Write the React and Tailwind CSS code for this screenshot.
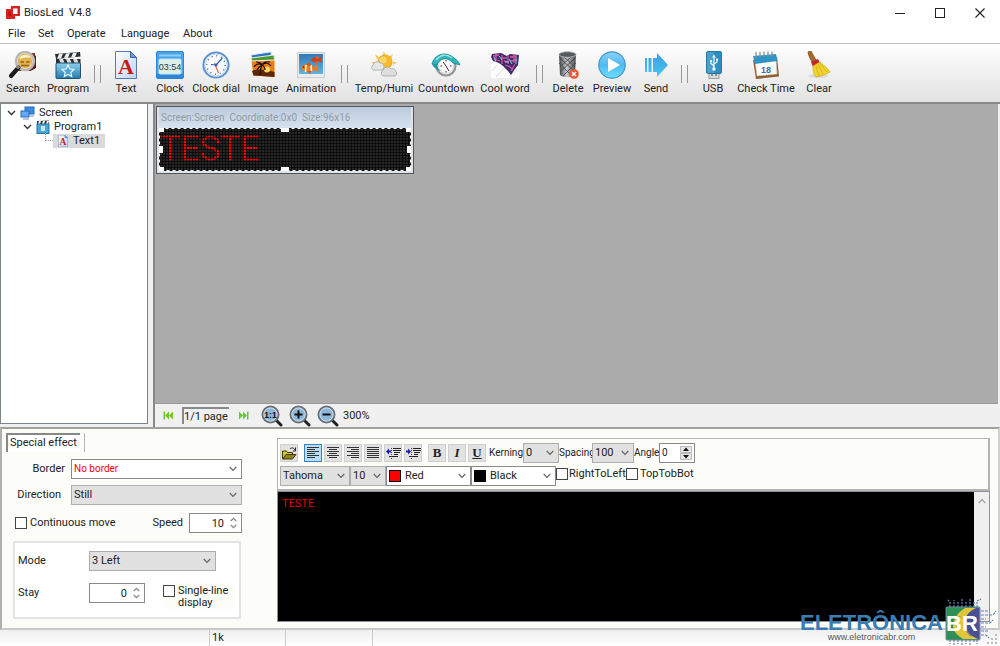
import { useState } from "react";

/* ---------- toolbar icons ---------- */

const SearchIcon = () => (
  <svg width="30" height="28" viewBox="0 0 30 28">
    <path d="M10 2h17v15l-4 3H10z" fill="#8d2f27" />
    <path d="M24 3l4 2v12l-4 2z" fill="#5b1c18" />
    <circle cx="17" cy="10" r="9" fill="#f1e3bd" stroke="#b9b9bd" strokeWidth="2.5" />
    <circle cx="17" cy="10" r="7.2" fill="#e2b34f" />
    <path d="M11 8c2-5 9-6 12-1-4-1-8 0-12 1z" fill="#fff2cf" />
    <path d="M12.500 11h3.500M18 11h3.500M13 14.500h8" stroke="#9a5f1c" strokeWidth="1.300" />
    <path d="M10.500 16.500L3 25" stroke="#1c1c1c" strokeWidth="4.200" strokeLinecap="round" />
    <path d="M11 15l-2 2.400" stroke="#8f8f8f" strokeWidth="3" />
  </svg>
);

const ProgramIcon = () => (
  <svg width="28" height="28" viewBox="0 0 28 28">
    <defs>
      <linearGradient id="clap" x1="0" y1="0" x2="0" y2="1">
        <stop offset="0" stopColor="#8ed2ee" />
        <stop offset="1" stopColor="#2279ad" />
      </linearGradient>
    </defs>
    <path d="M1 3l25-2 .5 4.500L2 8z" fill="#2b2f33" />
    <path d="M5 3l4-.4-2 4.800-4 .3zM12 2.400l4-.3-2 4.700-4 .3zM19 1.900l4-.3-2 4.700-4 .3z" fill="#eee" />
    <rect x="2" y="8" width="24.500" height="5" fill="#2b2f33" />
    <path d="M5 8h4l2 5H7zM12 8h4l2 5h-4zM19 8h4l2 5h-4z" fill="#ddd" />
    <rect x="2" y="12" width="24.500" height="15.500" rx="1" fill="url(#clap)" stroke="#25506b" />
    <path d="M14 14l1.800 3.900 4.200.5-3.100 2.900.8 4.200-3.700-2.100-3.700 2.100.8-4.200L8 18.400l4.200-.5z" fill="#4ba3dd" stroke="#e6f6ff" strokeWidth="1.200" />
  </svg>
);

const TextIcon = ({ size = 28 }) => (
  <svg width={size} height={size} viewBox="0 0 28 28">
    <defs>
      <linearGradient id="sheet" x1="0" y1="0" x2="1" y2="1">
        <stop offset="0" stopColor="#fff" />
        <stop offset="1" stopColor="#bcd6f5" />
      </linearGradient>
    </defs>
    <path d="M3.500.5h15l6 6v21h-21z" fill="url(#sheet)" stroke="#5577b5" />
    <path d="M18.500.5v6h6z" fill="#6e9ade" stroke="#3c62a8" />
    <text x="14" y="22.500" textAnchor="middle" fontFamily="Liberation Serif, serif" fontWeight="700" fontSize="22" fill="#c61a12">A</text>
  </svg>
);

const ClockIcon = () => (
  <svg width="28" height="28" viewBox="0 0 28 28">
    <rect x=".5" y=".5" width="27" height="27" rx="1.500" fill="#4aa3e8" stroke="#2b86d6" />
    <rect x="1" y="23" width="26" height="4" fill="#2f86d8" />
    <rect x="3" y="3.500" width="22" height="2" fill="#8bd0fa" />
    <rect x="3" y="8" width="22" height="15" rx="1" fill="#dcefe6" stroke="#c2e3f7" />
    <text x="14" y="18.500" textAnchor="middle" fontFamily="Liberation Sans, sans-serif" fontSize="9" fill="#1b3c4c">03:54</text>
  </svg>
);

const DialIcon = () => (
  <svg width="28" height="28" viewBox="0 0 28 28">
    <circle cx="14" cy="14" r="12.600" fill="#eef5fc" stroke="#5b93d0" strokeWidth="2" />
    <circle cx="14" cy="14" r="11" fill="#f7fbff" stroke="#c3daf0" />
    <circle cx="14" cy="14" r="9.200" fill="none" stroke="#556" strokeWidth="1.400" strokeDasharray="1 3.820" />
    <path d="M14 14L20.500 7M14 14l-5-.5" stroke="#2c62b0" strokeWidth="1.200" />
    <path d="M12.500 12l4 10" stroke="#ec6a47" strokeWidth="1.200" />
    <circle cx="14" cy="14" r="1.500" fill="#2c62b0" />
  </svg>
);

const ImageIcon = () => (
  <svg width="28" height="28" viewBox="0 0 28 28">
    <path d="M2 4L22 .8l1 10L4 14z" fill="#2e76c2" stroke="#e2ebf3" />
    <path d="M2 7l23-3 1 10L4 17z" fill="#4a9a38" stroke="#e2ebe0" />
    <path d="M2 10l24-1v17.500L4 25z" fill="#e97d12" stroke="#f4efe4" />
    <path d="M3 20c7-3 14-1 22.500 1v5L4.500 24.500z" fill="#5c2609" />
    <circle cx="18" cy="18.500" r="3" fill="#ffd766" />
    <path d="M11 24c0-4 .4-7 2-10M13 14c-3-2-6-1-8 2M13 14c3-3 7-2 9 1M13 14c-1-2-3-3-6-3M13 14c1-2 4-4 8-3M13 14c-2 1-4 3-5 5M13 14c2 1 3 2 3 5" stroke="#1d0c04" strokeWidth="1.200" fill="none" />
  </svg>
);

const AnimationIcon = () => (
  <svg width="28" height="28" viewBox="0 0 28 28">
    <defs>
      <linearGradient id="sea" x1="0" y1="0" x2="0" y2="1">
        <stop offset="0" stopColor="#3579b4" />
        <stop offset="1" stopColor="#5fb3df" />
      </linearGradient>
    </defs>
    <rect x=".5" y="1.500" width="27" height="25" fill="#e9edf0" stroke="#c8ced4" />
    <rect x="2" y="3" width="24" height="20" fill="url(#sea)" />
    <path d="M4 17c3-5 9-5 13-1l4-3-1 4 2 4-5-2c-4 4-10 2-13-2z" fill="#f07a1c" />
    <path d="M9 14l-.5 7M14 14l.5 6" stroke="#fff" strokeWidth="1.500" />
    <path d="M9 14l3-3 2 4zM10 20l3 3 1-3z" fill="#d95512" />
    <path d="M14 9c2-3 5-3 7-1l4-3-1 4 1 3-4-2c-2 3-6 1-7-1z" fill="#cf4218" />
    <path d="M18 7l2-3 2 4zM18 11l2 3 1-4z" fill="#e2602a" />
    <circle cx="6.500" cy="16" r=".8" fill="#111" />
  </svg>
);

const Cloud = ({ d, fill }) => <path d={d} fill={fill} stroke="#a3a6a6" strokeWidth=".8" />;

const TempIcon = () => (
  <svg width="28" height="28" viewBox="0 0 28 28">
    <path d="M14 0l1.500 5h-3zM5 3l4 3.500-2 2zM23 3l-2 5-2-2zM27 11l-4 3v-3zM1 11l5 0-1 3z" fill="#f4c64a" />
    <circle cx="15" cy="11" r="7" fill="#f6bb2c" stroke="#eea51c" />
    <circle cx="13" cy="9" r="3.500" fill="#fbd66a" />
    <Cloud d="M3 19a3 3 0 0 1 0-5 4 4 0 0 1 7-2 3.500 3.500 0 0 1 4 4l-1 3z" fill="#e4e6e5" />
    <Cloud d="M13 25a3.500 3.500 0 0 1 0-6 4.500 4.500 0 0 1 8-1 3.500 3.500 0 0 1 5 3 2.500 2.500 0 0 1-1 4z" fill="#dcdedd" />
  </svg>
);

const CountdownIcon = () => (
  <svg width="30" height="28" viewBox="0 0 30 28">
    <circle cx="15" cy="15" r="9.500" fill="#f6f7f7" stroke="#8e9593" strokeWidth="2.200" />
    <circle cx="15" cy="15" r="7.500" fill="#fafafa" stroke="#d5d9d8" />
    <path d="M15 15l-3-4M15 15l3 5M15 9v1.500M15 20v1.500M9.500 15H11M19 15h1.500" stroke="#333" />
    <path d="M1 13C3 4 14-1 23 7c3 2 5 4 6 7l-7-2C17 6 9 6 6 14z" fill="#2fb6bc" stroke="#13838d" strokeWidth=".8" />
    <path d="M5 9c4-5 10-7 16-2" stroke="#9be4e4" strokeWidth="1.300" fill="none" />
    <path d="M1 13c1 3 5 6 9 7-3-2-4-4-4-6z" fill="#1c9aa2" />
  </svg>
);

const CoolWordIcon = () => (
  <svg width="30" height="28" viewBox="0 0 30 28">
    <rect x="1" y="1" width="28" height="26" fill="#fcfcfc" />
    <path d="M2 20l5-6M6 26l8-9M2 9l6-7M20 26l8-8" stroke="#ddd" />
    <path d="M2 3l9-1 6 3 3-2 9 1-1 10-3 4-4 6-3-4-5-5-4-3-6-2-2-4z" fill="#3a2c6c" />
    <path d="M3 5l6-1M6 3v6M4 8l6 2M12 4v9M11 7h6M14 10l4 1M18 4v9M20 6l7-1M24 3v9M20 10l7-1M15 14l5 2M19 15l4 4M25 13l-4 7" stroke="#d0559a" strokeWidth="1.300" fill="none" />
    <path d="M9 5l3 4M19 8l3 5M15 11h4M4 6l2 5M26 6v7" stroke="#8fc9dc" />
  </svg>
);

const DeleteIcon = () => (
  <svg width="28" height="28" viewBox="0 0 28 28">
    <defs>
      <linearGradient id="bin" x1="0" x2="1">
        <stop offset="0" stopColor="#3d3f43" />
        <stop offset=".45" stopColor="#c8cacc" />
        <stop offset="1" stopColor="#45474b" />
      </linearGradient>
    </defs>
    <path d="M5 3h17l-1 21c-3 3-12 3-15 0z" fill="url(#bin)" />
    <path d="M6 7l15 14M5 12l13 13M9 5l12 11M21 7L6 21M22 12L9 25M17 6L6 16" stroke="#44464b" strokeWidth=".9" />
    <ellipse cx="13.500" cy="3.500" rx="8.500" ry="2.800" fill="#55585d" stroke="#b7babd" />
    <circle cx="20" cy="23" r="4.800" fill="#ec5431" />
    <path d="M18 21l4 4M22 21l-4 4" stroke="#fff" strokeWidth="1.600" />
  </svg>
);

const PreviewIcon = () => (
  <svg width="28" height="28" viewBox="0 0 28 28">
    <defs>
      <linearGradient id="play" x1="0" y1="0" x2="0" y2="1">
        <stop offset="0" stopColor="#8bd3f5" />
        <stop offset=".5" stopColor="#4fb9f0" />
        <stop offset="1" stopColor="#6fe0fb" />
      </linearGradient>
    </defs>
    <circle cx="14" cy="14" r="13.200" fill="url(#play)" stroke="#4295cf" strokeWidth="1.200" />
    <path d="M10 7l12 7-12 7z" fill="#fff" />
  </svg>
);

const SendIcon = () => (
  <svg width="28" height="28" viewBox="0 0 28 28">
    <defs>
      <linearGradient id="send" x1="0" y1="0" x2="0" y2="1">
        <stop offset="0" stopColor="#3a9be0" />
        <stop offset="1" stopColor="#4cc8f3" />
      </linearGradient>
    </defs>
    <path d="M3 7h2v14H3zM6.500 7h3v14h-3zM11 7h4V2l11 12-11 12v-5h-4z" fill="url(#send)" />
  </svg>
);

const UsbIcon = () => (
  <svg width="28" height="28" viewBox="0 0 28 28">
    <rect x="10" y="21" width="10" height="6.500" fill="#d8dadb" stroke="#9c9fa1" />
    <path d="M12 24h2M16 24h2" stroke="#777" strokeWidth="1.500" />
    <rect x="7.500" y=".5" width="15" height="22" rx="1.500" fill="#2e8ec0" stroke="#2777a3" />
    <path d="M8 1h7v21H8z" fill="#58aed6" opacity=".55" />
    <path d="M15 18V6M15 15l-3-2.500V10M15 13l3-2V8.500" stroke="#fff" strokeWidth="1.100" fill="none" />
    <path d="M15 3.500l1.800 3h-3.600z" fill="#fff" />
    <circle cx="15" cy="18" r="1.700" fill="#fff" />
    <circle cx="12" cy="10" r="1.100" fill="#fff" />
    <rect x="17" y="7.500" width="2" height="2" fill="#fff" />
  </svg>
);

const CheckTimeIcon = () => (
  <svg width="28" height="28" viewBox="0 0 28 28">
    <path d="M1 9l3 19 23-2.500L25 6z" fill="#8f5c33" />
    <path d="M3 10l2 15 20-2L24 8z" fill="#fbfbf8" stroke="#cfc6b8" strokeWidth=".6" />
    <path d="M1 5l23-2 1.500 7L3 13z" fill="#2d94c6" />
    <path d="M4 1v6M8 1v5.500M12 .5v5.500M16 .5V6M20 .5v5" stroke="#8b8f92" strokeWidth="1.300" />
    <text x="14" y="21.500" textAnchor="middle" fontFamily="Liberation Sans, sans-serif" fontWeight="700" fontSize="9" fill="#3d6dac">18</text>
  </svg>
);

const ClearIcon = () => (
  <svg width="28" height="28" viewBox="0 0 28 28">
    <ellipse cx="13" cy="25" rx="10" ry="2" fill="#dcdcdc" />
    <path d="M3 1c2-1 4-1 4 1l4 7-4 2-3-6z" fill="#a76826" stroke="#74420f" strokeWidth=".7" />
    <path d="M6 11l7-3 2 4-7 4z" fill="#c3252b" />
    <path d="M8 15l7-4c3 3 8 6 10 10-3 2-8 4-14 5-3-3-3-7-3-11z" fill="#f1d42b" stroke="#d3aa1c" strokeWidth=".7" />
    <path d="M11 15l3 10M13 13l5 10M15 12l7 9" stroke="#d3aa1c" strokeWidth=".8" />
  </svg>
);

const tools = [
  { label: "Search", icon: <SearchIcon />, w: "w-[46px]" },
  { label: "Program", icon: <ProgramIcon />, w: "w-[44px]" },
  { sep: true, w: "w-[14px]" },
  { label: "Text", icon: <TextIcon />, w: "w-[44px]" },
  { label: "Clock", icon: <ClockIcon />, w: "w-[44px]" },
  { label: "Clock dial", icon: <DialIcon />, w: "w-[48px]" },
  { label: "Image", icon: <ImageIcon />, w: "w-[46px]" },
  { label: "Animation", icon: <AnimationIcon />, w: "w-[50px]" },
  { sep: true, w: "w-[16px]" },
  { label: "Temp/Humi", icon: <TempIcon />, w: "w-[64px]" },
  { label: "Countdown", icon: <CountdownIcon />, w: "w-[60px]" },
  { label: "Cool word", icon: <CoolWordIcon />, w: "w-[58px]" },
  { sep: true, w: "w-[10px]" },
  { label: "Delete", icon: <DeleteIcon />, w: "w-[48px]" },
  { label: "Preview", icon: <PreviewIcon />, w: "w-[40px]" },
  { label: "Send", icon: <SendIcon />, w: "w-[48px]" },
  { sep: true, w: "w-[8px]" },
  { label: "USB", icon: <UsbIcon />, w: "w-[50px]" },
  { label: "Check Time", icon: <CheckTimeIcon />, w: "w-[56px]" },
  { label: "Clear", icon: <ClearIcon />, w: "w-[50px]" },
];

/* ---------- form pieces ---------- */

const Chevron = () => (
  <svg className="pointer-events-none mr-1 shrink-0" width="8" height="6" viewBox="0 0 8 6">
    <path d="M.7 1L4 4.500 7.300 1" fill="none" stroke="#666" strokeWidth="1.200" />
  </svg>
);

const Select = ({ id, label, value, className, swatch, textClass = "" }) => (
  <div className={`flex h-5 shrink-0 items-center border ${className}`}>
    {swatch}
    <select id={id} aria-label={label} defaultValue={value} className={`h-full min-w-0 flex-1 appearance-none bg-transparent pl-0.5 leading-4 outline-none ${textClass}`}>
      <option>{value}</option>
    </select>
    <Chevron />
  </div>
);

const Spin = ({ id, value, className }) => (
  <div className={`flex h-5 shrink-0 items-center border border-[#8a8a8a] bg-white ${className}`}>
    <input id={id} type="text" inputMode="numeric" defaultValue={value} className="h-full min-w-0 flex-1 bg-transparent pr-0.5 text-right outline-none" />
    <svg className="mx-1 shrink-0" width="7" height="12" viewBox="0 0 7 12">
      <path d="M.8 4L3.500 1.300 6.200 4M.8 8l2.700 2.700L6.200 8" fill="none" stroke="#888" strokeWidth="1.300" />
    </svg>
  </div>
);

const Check = ({ id, className = "" }) => (
  <input id={id} type="checkbox" className={`h-3 w-3 shrink-0 appearance-none border border-[#444] bg-white checked:bg-[#0078d7] ${className}`} />
);

const FormatButton = ({ label, active, children }) => (
  <button
    aria-label={label}
    className={`flex h-[18px] w-[18px] shrink-0 items-center justify-center border font-[Liberation_Serif,serif] text-[13px] font-bold leading-4 ${
      active ? "border-[#3c82c0] bg-[#b9dcf7]" : "border-[#cfcfcf] bg-[#e2e2e2]"
    }`}>
    {children}
  </button>
);

const Lines = ({ d }) => (
  <svg width="14" height="12" viewBox="0 0 14 12">
    <path d={d} stroke="#333" fill="none" />
  </svg>
);

const IndentIcon = ({ out }) => (
  <svg width="15" height="13" viewBox="0 0 15 13">
    <path d="M7 1.500h8M7 3.500h8M8 5.500h6M8 7.500h4M3 9.500h9" stroke="#222" />
    <path d="M5.500 1v12" stroke="#444" strokeDasharray="1 1" />
    <path d={out ? "M0 4.500l3-3v2h2v2H3v2z" : "M5 4.500l-3-3v2H0v2h2v2z"} fill="#1d1da8" />
  </svg>
);

const Magnifier = ({ children }) => (
  <svg width="22" height="22" viewBox="0 0 22 22">
    <path d="M15 15l5 5" stroke="#222" strokeWidth="3" strokeLinecap="round" />
    <circle cx="9.500" cy="9.500" r="8" fill="#a9cbe6" stroke="#686e75" strokeWidth="2" />
    <circle cx="9.500" cy="9.500" r="6.600" fill="#8db8da" stroke="#dce5ec" strokeWidth=".8" />
    {children}
  </svg>
);

const SkipIcon = ({ end }) => (
  <svg width="10" height="9" viewBox="0 0 10 9">
    <path d={end ? "M0 .5l4 4-4 4zM4 .5l4 4-4 4zM8 .5h1.500v8H8z" : "M10 .5l-4 4 4 4zM6 .5l-4 4 4 4zM.5.5H2v8H.5z"} fill="#6cc92b" />
  </svg>
);

const Expander = () => (
  <svg width="9" height="6" viewBox="0 0 9 6">
    <path d="M1 1l3.500 3.500L8 1" fill="none" stroke="#333" strokeWidth="1.400" />
  </svg>
);

/* LED matrix with resize handles over it */
const LedPanel = () => (
  <svg className="block" width="252" height="43" viewBox="0 0 252 43">
    <defs>
      <pattern id="leds" width="3" height="3" patternUnits="userSpaceOnUse">
        <path d="M0 .5h3M.5 0v3" stroke="#000" strokeOpacity=".6" />
      </pattern>
    </defs>
    <rect width="252" height="43" fill="#262626" />
    <text x="1" y="32" fontFamily="Roboto, sans-serif" fontWeight="300" fontSize="34" fill="#f00" stroke="#f00" strokeWidth=".6">TESTE</text>
    <rect width="252" height="43" fill="url(#leds)" />
    <rect x=".5" y=".5" width="251" height="42" fill="none" stroke="#fff" strokeDasharray="3 3" />
    <path d="M0 0h5v4H0zM122 0h8v4h-8zM247 0h5v4h-5zM0 18h4v7H0zM248 18h4v7h-4zM0 39h5v4H0zM122 39h8v4h-8zM247 39h5v4h-5z" fill="#fff" />
  </svg>
);

const Watermark = () => (
  <div className="pointer-events-none absolute right-0 bottom-0 flex items-end">
    <div className="flex flex-col items-center font-[Liberation_Sans,sans-serif]">
      <span className="text-[22px] font-bold leading-[18px] text-[#3a7cb1]">ELETRÔNICA</span>
      <span className="pb-1 text-[9px] leading-[10px] text-[#555]">www.eletronicabr.com</span>
    </div>
    <svg width="57" height="48" viewBox="0 0 57 48">
      <g stroke="#6381ac" fill="none" strokeWidth="1.200">
        <path d="M7 9V4L4 1M11 9V2M15 9V4M19 9V1M23 9V3M27 9V1M31 9V4M34 9V3l4-2M7 42v4M11 42v5M15 42v4M19 42v5M23 42v4M27 42v5M31 42v3M34 42v4" strokeDasharray="2 1" />
        <path d="M38 13h8M38 17h12l3-4M38 21h5M38 25h9l3-3M38 29h5M38 33h8M38 37h5l3 3" strokeDasharray="3 1" />
      </g>
      <rect x="3" y="9" width="34" height="33" rx="1" fill="#2f9055" stroke="#6f879e" />
      <path d="M28 10h8v31H25c-8-8-9-15-3-21z" fill="#4a4f96" />
      <path d="M22 10h11c-8 4-12 9-11 17 1 6 6 11 13 14H20c-6-4-9-7-10-12 0-7 4-14 12-19z" fill="#e0c63a" />
      <path d="M13 18c8 0 16 5 20 14l-4 7c-4-2-7-6-7-12 0-3 1-6 3-8-4 0-8 1-12-1z" fill="#4a4f96" opacity=".5" />
      <text x="3" y="33" fontFamily="Liberation Sans, sans-serif" fontWeight="700" fontSize="22" fill="#fff">BR</text>
      <path d="M52 36h2v2h-2zM48 40h2v2h-2zM52 40h2v2h-2zM44 44h2v2h-2zM48 44h2v2h-2zM52 44h2v2h-2z" fill="#bbb" />
    </svg>
  </div>
);

function App() {
  const [message, setMessage] = useState("TESTE");
  const grey = "border-[#adadad] bg-[#e1e1e1]";
  const white = "border-[#8a8a8a] bg-white";

  return (
    <div className="relative flex min-h-screen flex-col overflow-hidden bg-[#f0f0f0] font-[Roboto,sans-serif] text-[11px] leading-4 text-[#222]">
      {/* title bar */}
      <header className="flex h-[25px] items-center bg-white pl-1.5">
        <svg width="14" height="13" viewBox="0 0 14 13">
          <path d="M0 3h9v10H0z" fill="#d9231c" />
          <path d="M5 0h9v10H5z" fill="#d9231c" />
          <path d="M7 2.500h4.500v5.500H7z" fill="#fff" />
          <path d="M2.500 5.500H5V10H2.500z" fill="#b81510" />
        </svg>
        <h1 className="ml-1 whitespace-pre">BiosLed  V4.8</h1>
        <div className="ml-auto flex">
          <button aria-label="Minimize" className="flex w-10 justify-center">
            <svg width="10" height="10"><path d="M0 5.500h10" stroke="#222" /></svg>
          </button>
          <button aria-label="Maximize" className="flex w-10 justify-center">
            <svg width="10" height="10"><rect x=".5" y=".5" width="9" height="9" fill="none" stroke="#222" /></svg>
          </button>
          <button aria-label="Close" className="flex w-10 justify-center">
            <svg width="10" height="10"><path d="M.5.5l9 9M9.500.5l-9 9" stroke="#222" strokeWidth="1.100" /></svg>
          </button>
        </div>
      </header>

      <nav className="flex h-[19px] items-center border-b border-[#bdbdbd] bg-white pl-2">
        <button className="w-[30px] text-left">File</button>
        <button className="w-[29px] text-left">Set</button>
        <button className="w-[54px] text-left">Operate</button>
        <button className="w-[62px] text-left">Language</button>
        <button className="text-left">About</button>
      </nav>

      <div className="flex h-[60px] items-start border-b-2 border-[#888] bg-linear-to-b from-white to-[#e2e2e2] pt-[7px]">
        {tools.map((tool, index) =>
          tool.sep ? (
            <div key={index} className={`flex h-8 shrink-0 items-end justify-center gap-[5px] ${tool.w}`}>
              <span className="h-[18px] w-px bg-[#999]" />
              <span className="h-[18px] w-px bg-[#999]" />
            </div>
          ) : (
            <button key={index} className={`flex shrink-0 flex-col items-center gap-0.5 whitespace-nowrap ${tool.w}`}>
              {tool.icon}
              <span>{tool.label}</span>
            </button>
          )
        )}
      </div>

      {/* tree and workspace */}
      <main className="flex flex-1">
        <aside className="mb-[3px] w-[148px] shrink-0 border border-t-0 border-[#7d838b] bg-white pt-0.5">
          <ul className="leading-[14px]">
            <li className="flex items-center gap-1 pl-1.5">
              <Expander />
              <svg width="15" height="14" viewBox="0 0 15 14">
                <rect x="5" y="1" width="9" height="7" fill="#3e8ae0" stroke="#2a68b8" />
                <rect x="1" y="5" width="8" height="6" fill="#62a8f2" stroke="#2a68b8" />
                <path d="M3 13h6M10 10h4" stroke="#7393b8" />
              </svg>
              Screen
            </li>
            <li className="flex items-center gap-1 pl-[22px]">
              <Expander />
              <svg width="14" height="14" viewBox="0 0 14 14">
                <path d="M1 1l12-.5V4H1z" fill="#333" />
                <path d="M3 1h2L4 4H2zM7 1h2L8 4H6zM11 1h2l-1 3h-2z" fill="#fff" />
                <rect x="1" y="4" width="12" height="9.500" fill="#4ba6d6" stroke="#2474a2" />
                <path d="M5 6h4v5H5z" fill="#c9e9f8" />
              </svg>
              Program1
            </li>
            <li className="flex items-center pl-[44px]">
              <span className="-mt-2 h-2 w-2 border-b border-l border-dotted border-[#999]" />
              <span className="flex w-[52px] items-center gap-1 bg-[#dadada] pl-1">
                <TextIcon size={12} />
                Text1
              </span>
            </li>
          </ul>
        </aside>

        <div className="w-[7px] shrink-0 border-r-2 border-[#888]" />

        <section className="mr-0.5 flex min-w-0 flex-1 flex-col">
          <div className="flex-1 border-b border-[#999] bg-[#ababab] pt-0.5 pl-px">
            <div className="w-[258px] border border-[#555] bg-[#dfe3ea] px-0.5 pb-0.5">
              <h2 className="h-[21px] bg-linear-to-b from-[#bccbdc] to-[#d5e2ef] pl-0.5 text-[10px] leading-[22px] whitespace-pre text-[#909aa4]">Screen:Screen  Coordinate:0x0  Size:96x16</h2>
              <LedPanel />
            </div>
          </div>
          <div className="flex h-[23px] items-center pl-2">
            <button aria-label="First page"><SkipIcon /></button>
            <span className="ml-[9px] w-[47px] border-t-2 border-l-2 border-[#888] leading-[15px] whitespace-nowrap">1/1 page</span>
            <button aria-label="Last page" className="ml-2.5"><SkipIcon end /></button>
            <button aria-label="Actual size" className="ml-3">
              <Magnifier>
                <text x="9.500" y="12.500" textAnchor="middle" fontFamily="Liberation Sans, sans-serif" fontWeight="700" fontSize="8.500" fill="#111">1:1</text>
              </Magnifier>
            </button>
            <button aria-label="Zoom in" className="ml-1.5">
              <Magnifier><path d="M5.500 9.500h8M9.500 5.500v8" stroke="#111" strokeWidth="2" /></Magnifier>
            </button>
            <button aria-label="Zoom out" className="ml-1.5">
              <Magnifier><path d="M5.500 9.500h8" stroke="#111" strokeWidth="2" /></Magnifier>
            </button>
            <span className="ml-1">300%</span>
          </div>
        </section>
      </main>

      {/* properties */}
      <div className="flex h-[203px] shrink-0 border-2 border-t-[#a0a0a0] border-r-[#d0d0d0] border-b-[#c8c8c8] border-l-[#b0b0b0] bg-[#fcfdf8]">
        <section className="w-[275px] shrink-0 pt-1 pl-1">
          <div className="flex h-[19px] gap-1">
            <h2 className="w-[74px] border-t-2 border-l-2 border-[#888] bg-white pl-0.5 leading-4 whitespace-nowrap">Special effect</h2>
            <span className="w-px bg-[#b5b5b5]" />
          </div>

          <div className="mt-[7px] flex w-[236px] items-center justify-end gap-1.5">
            <label htmlFor="border">Border</label>
            <Select id="border" value="No border" className={`w-[171px] ${white}`} textClass="text-[10px] text-[#f00]" />
          </div>
          <div className="mt-1.5 flex w-[236px] items-center justify-end gap-2.5">
            <label htmlFor="direction">Direction</label>
            <Select id="direction" value="Still" className={`w-[171px] ${grey}`} />
          </div>
          <div className="mt-2 flex w-[236px] items-center pl-[9px]">
            <Check id="continuous" />
            <label htmlFor="continuous" className="ml-[3px]">Continuous move</label>
            <label htmlFor="speed" className="mr-1.5 ml-auto">Speed</label>
            <Spin id="speed" value="10" className="w-[53px]" />
          </div>

          <div className="mt-2 ml-[7px] flex h-[78px] w-[228px] flex-col gap-3 border-2 border-[#e3e4e4] bg-white pt-2 pl-[3px]">
            <div className="flex items-center">
              <label htmlFor="mode" className="w-[71px]">Mode</label>
              <Select id="mode" value="3 Left" className={`w-[127px] ${grey}`} />
            </div>
            <div className="flex h-5 items-start">
              <label htmlFor="stay" className="w-[71px] leading-5">Stay</label>
              <Spin id="stay" value="0" className="w-[56px]" />
              <div className="ml-[18px] flex gap-[3px] bg-[#fcfdf8] pt-0.5">
                <Check id="single" />
                <label htmlFor="single" className="w-14 leading-3">Single-line display</label>
              </div>
            </div>
          </div>
        </section>

        <section className="mt-[9px] mr-2 mb-1.5 flex min-w-0 flex-1 flex-col">
          <div className="flex h-[53px] shrink-0 flex-col gap-[3px] border border-r-2 border-b-2 border-[#b5b5b5] pt-1 pl-0.5 whitespace-nowrap">
            <div className="flex h-5 items-center gap-0.5">
              <FormatButton label="Open">
                <svg width="15" height="13" viewBox="0 0 15 13">
                  <path d="M.5 12V4h4l1 1.500h5V8" fill="#d5c928" stroke="#3d390a" />
                  <path d="M.5 12L4 7.500h10L10.500 12z" fill="#8f8617" stroke="#3d390a" />
                  <path d="M8 2c2-2 4-1 5 1M13.500.5V4H11" fill="none" stroke="#222" />
                </svg>
              </FormatButton>
              <span className="w-0.5" />
              <FormatButton label="Align left" active><Lines d="M1 .5h12M1 2.500h8M1 4.500h12M1 6.500h8M1 8.500h12M1 10.500h8" /></FormatButton>
              <FormatButton label="Align centre"><Lines d="M1 .5h12M3 2.500h8M1 4.500h12M3 6.500h8M1 8.500h12M3 10.500h8" /></FormatButton>
              <FormatButton label="Align right"><Lines d="M1 .5h12M5 2.500h8M1 4.500h12M5 6.500h8M1 8.500h12M5 10.500h8" /></FormatButton>
              <FormatButton label="Justify"><Lines d="M1 .5h12M1 2.500h12M1 4.500h12M1 6.500h12M1 8.500h12M1 10.500h12" /></FormatButton>
              <FormatButton label="Decrease indent"><IndentIcon out /></FormatButton>
              <FormatButton label="Increase indent"><IndentIcon /></FormatButton>
              <span className="w-0.5" />
              <FormatButton label="Bold">B</FormatButton>
              <FormatButton label="Italic"><i>I</i></FormatButton>
              <FormatButton label="Underline"><u>U</u></FormatButton>
              <div className="flex items-center text-[10px]">
                <label htmlFor="kerning" className="w-[35px] text-right">Kerning</label>
                <Select id="kerning" value="0" className={`w-[36px] ${grey}`} textClass="text-[11px]" />
                <label htmlFor="spacing" className="w-[33px] text-right">Spacing</label>
                <Select id="spacing" value="100" className={`w-[42px] ${grey}`} textClass="text-[11px]" />
                <label htmlFor="angle" className="w-[25px] text-right">Angle</label>
                <div className="flex h-5 w-[36px] items-center border border-[#8a8a8a] bg-white">
                  <input id="angle" type="text" defaultValue="0" className="min-w-0 flex-1 pl-0.5 outline-none" />
                  <svg className="mr-0.5 shrink-0" width="12" height="14" viewBox="0 0 12 14">
                    <path d="M.5.500h11v6H.5zM.5 7.500h11v6H.5z" fill="#e6e6e6" stroke="#bbb" />
                    <path d="M3 5l3-3.500L9 5zM3 9l3 3.500L9 9z" fill="#111" />
                  </svg>
                </div>
              </div>
            </div>
            <div className="flex h-5 items-center">
              <Select label="Font" value="Tahoma" className={`w-[70px] ${grey}`} />
              <Select label="Font size" value="10" className={`w-[36px] ${grey}`} />
              <Select label="Text colour" value="Red" className={`w-[85px] ${white}`} swatch={<span className="mx-0.5 h-3 w-3 border border-black bg-[#f00]" />} />
              <Select label="Background colour" value="Black" className={`w-[85px] ${white}`} swatch={<span className="mx-0.5 h-3 w-3 bg-black" />} />
              <div className="flex items-center pb-1">
                <Check id="rtl" />
                <label htmlFor="rtl" className="w-[58px] pl-px">RightToLeft</label>
                <Check id="ttb" />
                <label htmlFor="ttb" className="pl-0.5">TopTobBot</label>
              </div>
            </div>
          </div>
          <div className="flex flex-1 border border-[#8d9096] bg-[#f0f0f0]">
            <textarea
              aria-label="Message"
              value={message}
              onChange={(e) => setMessage(e.target.value)}
              className="block flex-1 resize-none bg-black px-1 pt-1 text-[#e00000] outline-none"
            />
            <div className="flex w-[15px] justify-center pt-1.5">
              <svg width="8" height="6" viewBox="0 0 8 6">
                <path d="M.7 5L4 1.500 7.300 5" fill="none" stroke="#aaa" strokeWidth="1.500" />
              </svg>
            </div>
          </div>
        </section>
      </div>

      <footer className="flex h-4 shrink-0 bg-linear-to-b from-[#efefef] to-white leading-4">
        <span className="w-[209px]" />
        <span className="w-[76px] border-l border-[#ccc] pl-0.5">1k</span>
        <span className="w-[87px] border-l border-[#ccc]" />
        <span className="flex-1 border-l border-[#ccc]" />
      </footer>

      <Watermark />
    </div>
  );
}

export default App;
